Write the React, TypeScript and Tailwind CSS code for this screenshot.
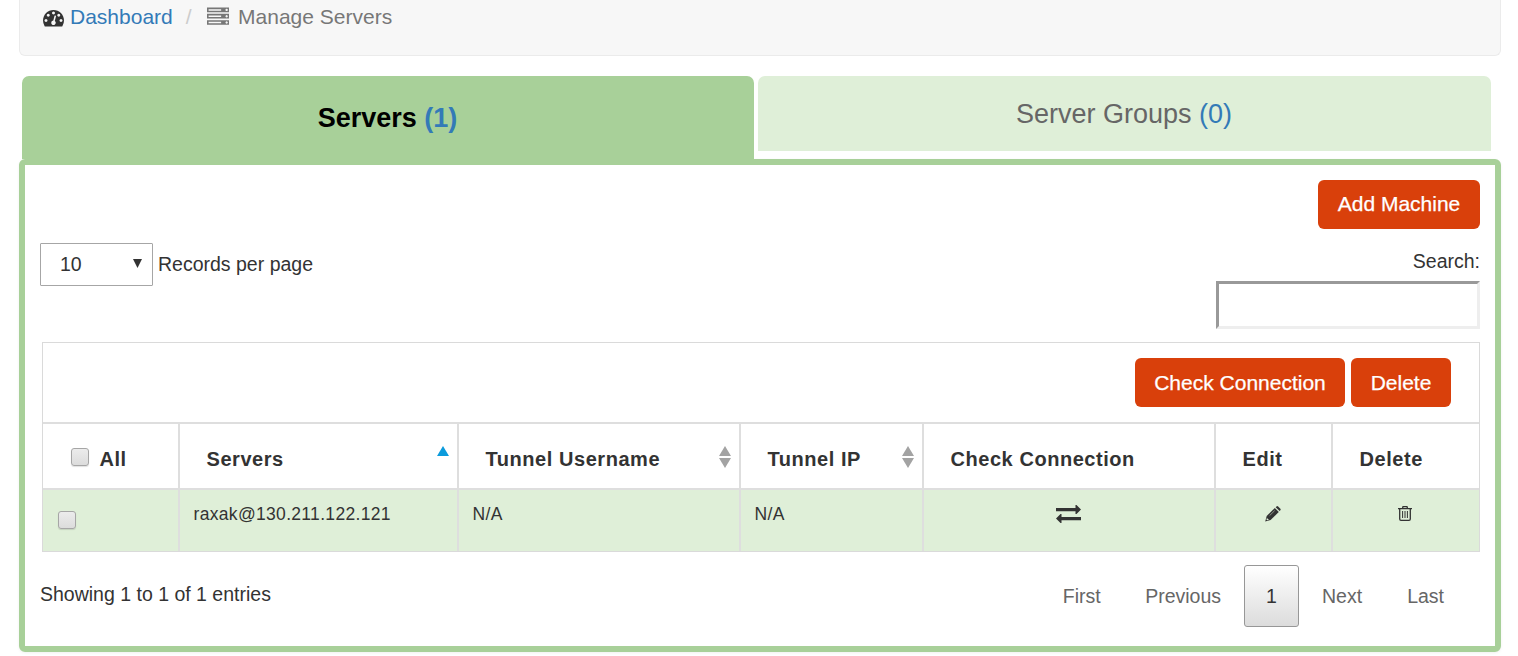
import React from "react";

const dashIcon =
  "M384 1152q0-53-37.5-90.5t-90.5-37.5-90.5 37.5-37.5 90.5 37.5 90.5 90.5 37.5 90.5-37.5 37.5-90.5zm192-448q0-53-37.5-90.5t-90.5-37.5-90.5 37.5-37.5 90.5 37.5 90.5 90.5 37.5 90.5-37.5 37.5-90.5zm428 481l101-382q6-26-7.5-48.5t-38.5-29.5-48 6.5-30 39.5l-101 382q-60 5-107 43.5t-63 98.5q-20 77 20 146t117 89 146-20 89-117q16-60-6-117t-72-91zm660-33q0-53-37.5-90.5t-90.5-37.5-90.5 37.5-37.5 90.5 37.5 90.5 90.5 37.5 90.5-37.5 37.5-90.5zm-640-640q0-53-37.5-90.5t-90.5-37.5-90.5 37.5-37.5 90.5 37.5 90.5 90.5 37.5 90.5-37.5 37.5-90.5zm448 192q0-53-37.5-90.5t-90.5-37.5-90.5 37.5-37.5 90.5 37.5 90.5 90.5 37.5 90.5-37.5 37.5-90.5zm320 448q0 261-141 483-19 29-54 29h-1402q-35 0-54-29-141-221-141-483 0-182 71-348t191-286 286-191 348-71 348 71 286 191 191 286 71 348z";
const serverIcon =
  "M128 1408h1024v-128h-1024v128zm0-512h1024v-128h-1024v128zm1568 448q0-40-28-68t-68-28-68 28-28 68 28 68 68 28 68-28 28-68zm-1568-960h1024v-128h-1024v128zm1568 448q0-40-28-68t-68-28-68 28-28 68 28 68 68 28 68-28 28-68zm0-512q0-40-28-68t-68-28-68 28-28 68 28 68 68 28 68-28 28-68zm96 832v384h-1792v-384h1792zm0-512v384h-1792v-384h1792zm0-512v384h-1792v-384h1792z";

function SortIcon({ sorted }: { sorted?: boolean }) {
  return (
    <svg width="12" height="22" viewBox="0 0 12 22" className="mb-[5px] shrink-0">
      <path d="M6 0L12 10H0Z" fill={sorted ? "#0c9bdc" : "#a3a3a3"} />
      {!sorted && <path d="M0 12H12L6 22Z" fill="#a3a3a3" />}
    </svg>
  );
}

function Checkbox() {
  return (
    <span className="block h-[18px] w-[18px] shrink-0 rounded-[3px] border-[1.5px] border-[#a6a6a6] bg-linear-to-b from-[#ececec] to-[#dcdcdc] shadow-[0_1px_1px_rgba(0,0,0,0.12)]" />
  );
}

function Button({ children, className }: { children: React.ReactNode; className: string }) {
  return (
    <button className={"h-[49px] rounded-[6px] bg-[#d9400b] text-[21px] leading-[30px] text-white [-webkit-text-stroke:0.25px_white] " + className}>
      {children}
    </button>
  );
}

const cols = "grid grid-cols-[135px_279px_282px_183px_292px_117px_148px]";
const th = "flex items-center justify-between border-l-2 border-[#dedede] pl-[26.5px] pr-[8px] pt-[6px] first:border-l-0";
const td = "border-l-2 border-[#dedede] pl-[13.5px] pt-[11px] first:border-l-0";

export default function App() {
  return (
    <div className="h-[656px] w-[1518px] overflow-hidden bg-white font-['Liberation_Sans',Arial,sans-serif] text-[19.5px] text-[#333]">
      <div className="ml-[19px] flex h-[56px] w-[1482px] rounded-b-[6px] border-x-[1.5px] border-b-[1.5px] border-[#ebebeb] bg-[#f7f7f7] pl-[23px] text-[21px] leading-[30px]">
        <div className="flex h-[34px] items-center">
          <svg width="21" height="21" viewBox="0 0 1792 1792" fill="#333">
            <path d={dashIcon} />
          </svg>
          <span className="ml-[6px] text-[#337ab7]">Dashboard</span>
          <span className="ml-[13px] text-[#ccc]">/</span>
          <svg width="22" height="22" viewBox="0 0 1792 1792" className="-mt-[1px] ml-[15.5px]" fill="#777">
            <path d={serverIcon} />
          </svg>
          <span className="ml-[9px] text-[#777]">Manage Servers</span>
        </div>
      </div>

      <div className="ml-[22px] mt-[20px] flex h-[83px] items-start gap-[4px] text-[27px]">
        <div className="flex h-[83px] w-[732px] items-center justify-center rounded-t-[7px] bg-[#a8d099] pr-[1px] pt-[2px] font-bold text-black">
          <span>
            Servers <span className="text-[#337ab7]">(1)</span>
          </span>
        </div>
        <div className="flex h-[75px] w-[733px] items-center justify-center rounded-t-[7px] bg-[#dfefd8] pr-[1px] pt-[1px] text-[#666]">
          <span>
            Server Groups <span className="text-[#337ab7]">(0)</span>
          </span>
        </div>
      </div>

      <div className="ml-[19px] h-[493px] w-[1482px] rounded-[6px] border-[6px] border-[#a8d099] shadow-[0_1px_3px_rgba(0,0,0,0.06)]">
        <div className="flex justify-end pr-[15px] pt-[15px]">
          <Button className="w-[162px] pb-[2px]">Add Machine</Button>
        </div>
        <div className="flex h-[113px] justify-between pl-[15px] pr-[15px]">
          <div className="flex h-[43px] items-center pt-[14px]">
            <div className="mt-[14px] flex h-[43px] w-[113px] shrink-0 items-center justify-between rounded-[1px] border border-[#a6a6a6] pl-[19px] pr-[10px]">
              <span>10</span>
              <svg width="9" height="9" viewBox="0 0 9 9" className="mb-[2px]">
                <path d="M0 0H9L4.5 9Z" fill="#333" />
              </svg>
            </div>
            <span className="ml-[5px] mt-[14px]">Records per page</span>
          </div>
          <div className="flex flex-col items-end pt-[18px]">
            <span className="leading-[28px]">Search:</span>
            <input className="mt-[6px] h-[48px] w-[264px] border-[3px] border-b-[#eee] border-l-[#999] border-r-[#eee] border-t-[#999] bg-white" />
          </div>
        </div>

        <div className="ml-[17px] h-[210px] w-[1438px] border border-[#dadada]">
          <div className="flex h-[79px] justify-end gap-[6px] pr-[28px] pt-[15px]">
            <Button className="w-[210px]">Check Connection</Button>
            <Button className="w-[100px]">Delete</Button>
          </div>
          <div className={cols + " h-[66px] border-t-2 border-[#dedede] text-[20px] font-bold tracking-[0.55px]"}>
            <div className={th}>
              <div className="flex items-center gap-[11px] pl-px">
                <span className="mb-[4px]">
                  <Checkbox />
                </span>
                <span>All</span>
              </div>
            </div>
            <div className={th}>
              <span>Servers</span>
              <SortIcon sorted />
            </div>
            <div className={th}>
              <span>Tunnel Username</span>
              <SortIcon />
            </div>
            <div className={th}>
              <span>Tunnel IP</span>
              <SortIcon />
            </div>
            <div className={th}>Check Connection</div>
            <div className={th}>Edit</div>
            <div className={th}>Delete</div>
          </div>
          <div className={cols + " h-[63px] border-t-2 border-[#dedede] bg-[#dfefd8] text-[17.5px] leading-[26px] tracking-[0.32px]"}>
            <div className={td}>
              <div className="pl-[1.5px] pt-[10px]">
                <Checkbox />
              </div>
            </div>
            <div className={td}>raxak@130.211.122.121</div>
            <div className={td}>N/A</div>
            <div className={td}>N/A</div>
            <div className="flex justify-center border-l-2 border-[#dedede] pr-[2px] pt-[15px]">
              <svg width="25" height="18" viewBox="0 0 25 18" fill="#333">
                <path d="M0 3H19.5V0H20.5L25 4.5L20.5 9H19.5V6.2H0Z" />
                <path d="M25 12H5.5V9H4.5L0 13.5L4.5 18H5.5V15.2H25Z" />
              </svg>
            </div>
            <div className="flex justify-center border-l-2 border-[#dedede] pr-[2px] pt-[16px]">
              <svg width="16" height="16" viewBox="0 0 16 16" fill="#333">
                <path d="M10.7 1.2L11.5 0.4Q12.3 -0.2 13.1 0.5L15.4 2.8Q16 3.6 15.4 4.3L14.6 5.1Z" />
                <path d="M9.8 2L13.8 5.9L5.6 13.9L0.2 15.4L1.7 10.1Z" />
                <path d="M4.6 9.6L9.7 4.6" stroke="#a5ad9f" strokeWidth="0.8" />
                <path d="M1.9 11.9L3.9 13.8L2.2 14.2L1.4 13.4Z" fill="#dfefd8" />
              </svg>
            </div>
            <div className="flex justify-center border-l-2 border-[#dedede] pr-[3px] pt-[16px]">
              <svg width="14" height="15" viewBox="0 0 14 15" fill="none" stroke="#333" strokeWidth="1.3">
                <path d="M0 2.6H14M4.4 2.6L5 0.7H9L9.6 2.6M1.7 2.6V13Q1.7 14.3 3 14.3H11Q12.3 14.3 12.3 13V2.6" />
                <path d="M4.6 5V12M7 5V12M9.4 5V12" strokeWidth="1" />
              </svg>
            </div>
          </div>
        </div>

        <div className="flex justify-between pl-[15px] pt-[13px]">
          <span className="pt-[15px] leading-[28px]">Showing 1 to 1 of 1 entries</span>
          <div className="flex h-[62px] items-center pr-[51px] text-[#666]">
            <span className="mr-[44.5px] pt-px">First</span>
            <span className="mr-[23px] pt-px">Previous</span>
            <span className="mr-[23px] flex h-[62px] w-[55px] items-center justify-center rounded-[3px] border-[1.5px] border-[#979797] bg-linear-to-b from-white to-[#dcdcdc] pt-px text-[#333]">1</span>
            <span className="mr-[45px] pt-px">Next</span>
            <span className="pt-px">Last</span>
          </div>
        </div>
      </div>
    </div>
  );
}
